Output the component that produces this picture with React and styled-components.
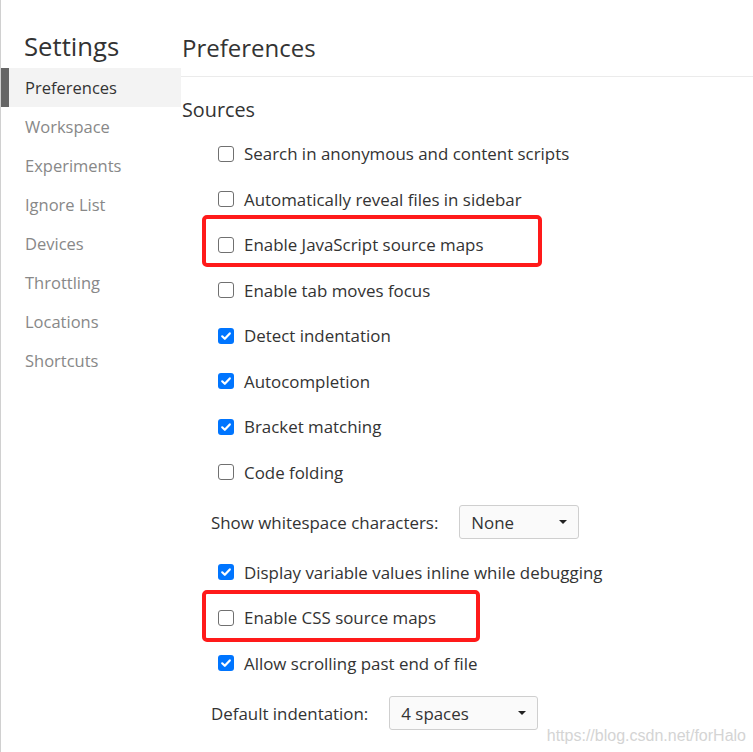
import React from "react";
import styled, { createGlobalStyle } from "styled-components";

const GlobalStyle = createGlobalStyle`
  html, body {
    margin: 0;
    padding: 0;
    background: #fff;
    overflow: hidden;
  }
  body {
    font-family: "Open Sans", "Noto Sans", sans-serif;
    color: #333;
  }
`;

const Page = styled.div`
  position: relative;
  display: flex;
  height: 752px;
  border-left: 1px solid #d0d0d0;
`;

const Sidebar = styled.nav`
  width: 180px;
  flex-shrink: 0;
  display: flex;
  flex-direction: column;
`;

const SidebarTitle = styled.h1`
  margin: 29px 0 3px 23px;
  font-size: 25.7px;
  line-height: 36px;
  font-weight: 400;
  color: #333;
`;

const NavItem = styled.div`
  height: 39px;
  line-height: 39px;
  padding-left: 16px;
  border-left: 8px solid ${(p) => (p.$active ? "#666" : "transparent")};
  background: ${(p) => (p.$active ? "#f3f3f3" : "transparent")};
  color: ${(p) => (p.$active ? "#333" : "#888")};
  font-size: 16.5px;
`;

const Main = styled.main`
  flex: 1;
  display: flex;
  flex-direction: column;
`;

const Header = styled.h2`
  margin: 0;
  padding: 32px 0 12px 1px;
  font-size: 24px;
  line-height: 32px;
  font-weight: 400;
  border-bottom: 1px solid #ebebeb;
`;

const SectionTitle = styled.h3`
  margin: 19px 0 7px 1px;
  font-size: 19.8px;
  line-height: 28px;
  font-weight: 400;
`;

const CheckRow = styled.label`
  position: relative;
  display: flex;
  align-items: center;
  gap: 10px;
  height: 45.5px;
  padding-left: 37px;
  font-size: 16.9px;
`;

const Box = styled.span`
  width: 16px;
  height: 16px;
  box-sizing: border-box;
  border-radius: 3px;
  display: flex;
  align-items: center;
  justify-content: center;
  border: ${(p) => (p.$checked ? "none" : "1.5px solid #707070")};
  background: ${(p) => (p.$checked ? "#0075ff" : "#fff")};
`;

const SelectRow = styled.div`
  display: flex;
  align-items: center;
  height: 54.5px;
  padding-left: 30px;
  font-size: 16.9px;
`;

const Select = styled.div`
  margin-left: 21px;
  width: ${(p) => p.$width}px;
  height: 34px;
  box-sizing: border-box;
  border: 1px solid #cfcfcf;
  border-radius: 3px;
  background: #fafafa;
  display: flex;
  align-items: center;
  justify-content: space-between;
  padding: 0 11px 0 11px;
`;

const Caret = styled.span`
  width: 0;
  height: 0;
  border-left: 4px solid transparent;
  border-right: 4px solid transparent;
  border-top: 4px solid #222;
`;

const Highlight = styled.span`
  position: absolute;
  left: 21px;
  top: ${(p) => p.$top}px;
  width: ${(p) => p.$width}px;
  height: 52px;
  box-sizing: border-box;
  border: 4px solid #ff1a1a;
  border-radius: 5px;
  pointer-events: none;
`;

const Watermark = styled.div`
  position: absolute;
  right: 7px;
  bottom: 7px;
  font-family: "Liberation Sans", Arial, sans-serif;
  font-size: 16px;
  color: #d4d4d4;
`;

const Check = ({ checked }) => (
  <Box $checked={checked}>
    {checked && (
      <svg width="12" height="12" viewBox="0 0 12 12">
        <path
          d="M2.2 6.3 L4.8 8.8 L9.8 3.4"
          fill="none"
          stroke="#fff"
          strokeWidth="2.2"
          strokeLinecap="round"
          strokeLinejoin="round"
        />
      </svg>
    )}
  </Box>
);

const navItems = [
  "Preferences",
  "Workspace",
  "Experiments",
  "Ignore List",
  "Devices",
  "Throttling",
  "Locations",
  "Shortcuts",
];

const firstOptions = [
  { label: "Search in anonymous and content scripts" },
  { label: "Automatically reveal files in sidebar" },
  { label: "Enable JavaScript source maps", mark: { top: -7, width: 340 } },
  { label: "Enable tab moves focus" },
  { label: "Detect indentation", checked: true },
  { label: "Autocompletion", checked: true },
  { label: "Bracket matching", checked: true },
  { label: "Code folding" },
];

const secondOptions = [
  { label: "Display variable values inline while debugging", checked: true },
  { label: "Enable CSS source maps", mark: { top: -5, width: 278 } },
  { label: "Allow scrolling past end of file", checked: true },
];

const Option = ({ label, checked, mark }) => (
  <CheckRow>
    <Check checked={checked} />
    {label}
    {mark && <Highlight $top={mark.top} $width={mark.width} />}
  </CheckRow>
);

export default function App() {
  return (
    <>
      <GlobalStyle />
      <Page>
        <Sidebar>
          <SidebarTitle>Settings</SidebarTitle>
          {navItems.map((item, i) => (
            <NavItem key={item} $active={i === 0}>
              {item}
            </NavItem>
          ))}
        </Sidebar>
        <Main>
          <Header>Preferences</Header>
          <SectionTitle>Sources</SectionTitle>
          {firstOptions.map((o) => (
            <Option key={o.label} {...o} />
          ))}
          <SelectRow>
            Show whitespace characters:
            <Select $width={120}>
              None
              <Caret />
            </Select>
          </SelectRow>
          {secondOptions.map((o) => (
            <Option key={o.label} {...o} />
          ))}
          <SelectRow>
            Default indentation:
            <Select $width={149}>
              4 spaces
              <Caret />
            </Select>
          </SelectRow>
        </Main>
        <Watermark>https://blog.csdn.net/forHalo</Watermark>
      </Page>
    </>
  );
}
